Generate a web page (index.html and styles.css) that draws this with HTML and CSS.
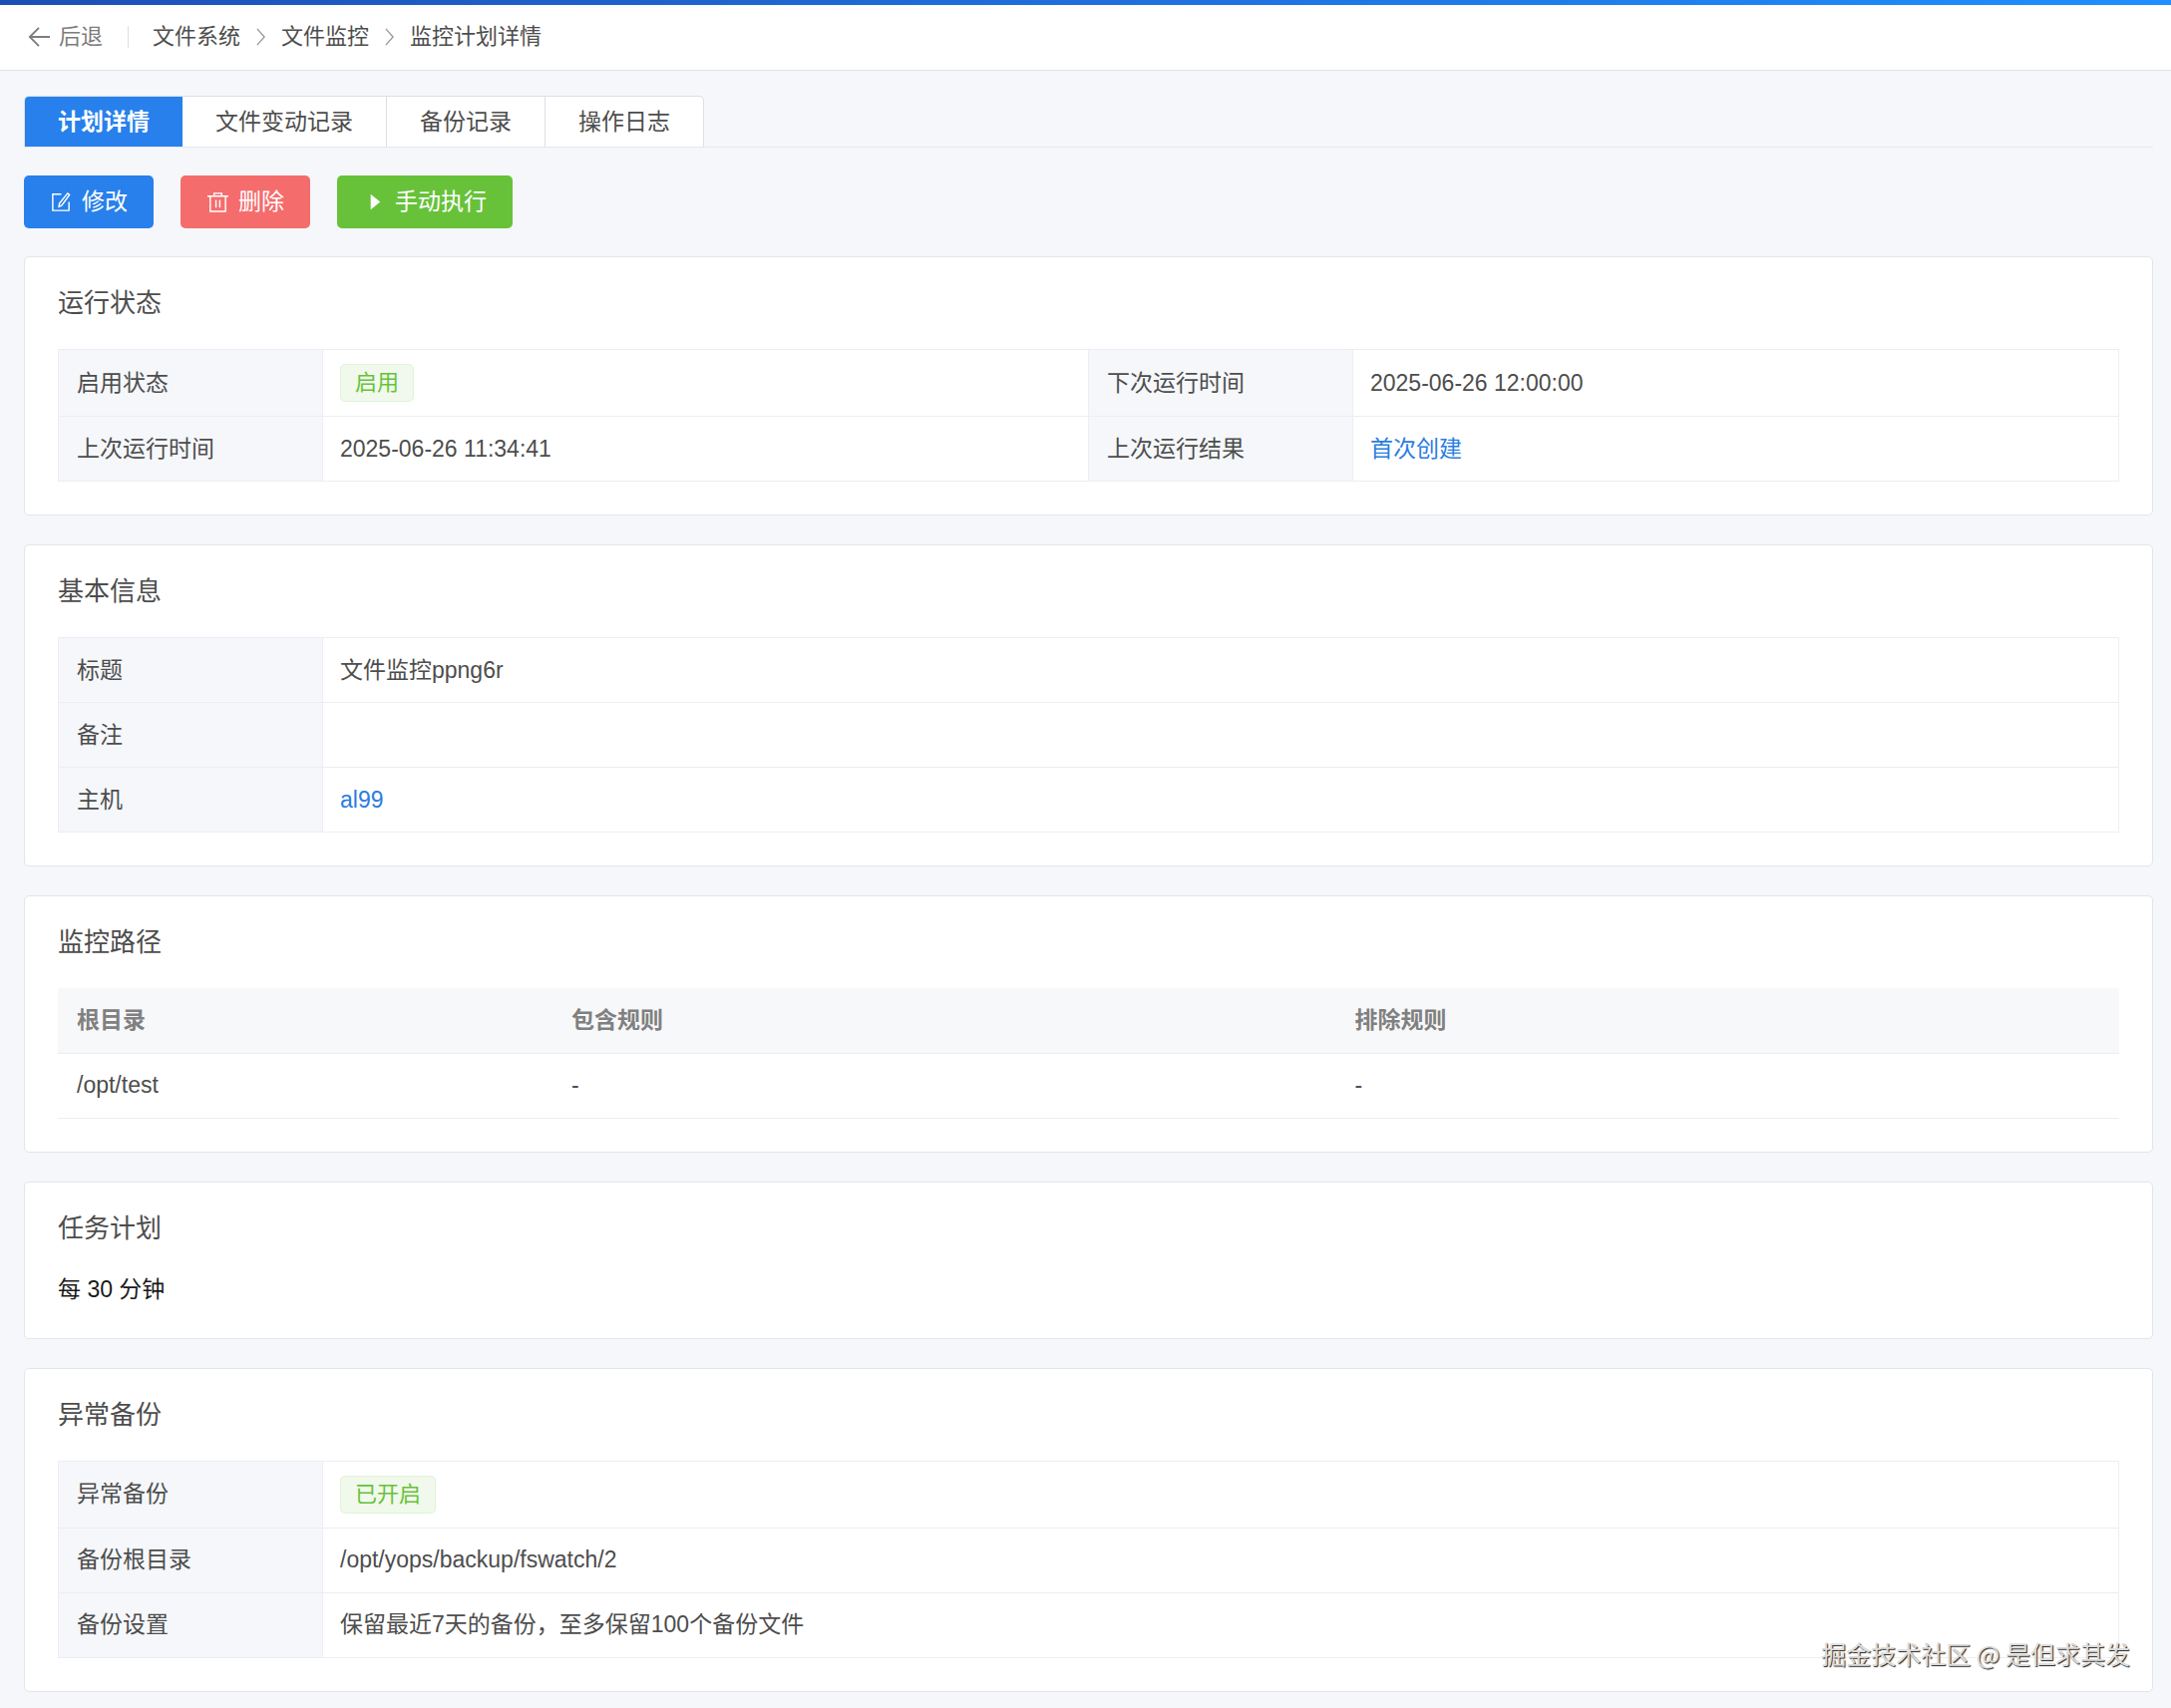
FILE: index.html
```html
<!DOCTYPE html>
<html lang="zh-CN">
<head>
    <meta charset="UTF-8">
    <meta name="viewport" content="width=device-width, initial-scale=1.0">
    <title>监控计划详情</title>
    <link rel="stylesheet" href="styles.css">
</head>
<body>
    <header class="page-header">
        <a class="back" href="#">
            <svg class="back-icon" viewBox="0 0 24 24"><path d="M24 12H2M12 2L2 12l10 10"/></svg>
            后退
        </a>
        <nav class="breadcrumb">
            <a href="#">文件系统</a>
            <svg class="sep" viewBox="0 0 10 20"><path d="M1 1l8 9-8 9"/></svg>
            <a href="#">文件监控</a>
            <svg class="sep" viewBox="0 0 10 20"><path d="M1 1l8 9-8 9"/></svg>
            <span>监控计划详情</span>
        </nav>
    </header>

    <main class="content">
        <nav class="tabs">
            <div class="tabs-nav">
                <a class="tab active" href="#">计划详情</a>
                <a class="tab" href="#">文件变动记录</a>
                <a class="tab" href="#">备份记录</a>
                <a class="tab" href="#">操作日志</a>
            </div>
        </nav>

        <div class="toolbar">
            <button class="btn btn-primary" type="button">
                <svg viewBox="0 0 24 24"><path d="M12 4H3v17h17v-9M18.500 3l2 1.500-8 11-3 1.500.500-3.500z"/></svg>
                修改
            </button>
            <button class="btn btn-danger" type="button">
                <svg viewBox="0 0 24 24"><path d="M1 6h22M8 6V3h8v3M4 6v16h16V6M10 10v8M14 10v8"/></svg>
                删除
            </button>
            <button class="btn btn-success" type="button">
                <svg viewBox="0 0 24 24"><path class="solid" d="M8 4l10 8-10 8z"/></svg>
                手动执行
            </button>
        </div>

        <section class="card">
            <h2>运行状态</h2>
            <table class="desc">
                <tr class="tall">
                    <th>启用状态</th>
                    <td><span class="tag">启用</span></td>
                    <th>下次运行时间</th>
                    <td>2025-06-26 12:00:00</td>
                </tr>
                <tr>
                    <th>上次运行时间</th>
                    <td>2025-06-26 11:34:41</td>
                    <th>上次运行结果</th>
                    <td><a href="#">首次创建</a></td>
                </tr>
            </table>
        </section>

        <section class="card">
            <h2>基本信息</h2>
            <table class="desc">
                <tr>
                    <th>标题</th>
                    <td>文件监控ppng6r</td>
                </tr>
                <tr>
                    <th>备注</th>
                    <td></td>
                </tr>
                <tr>
                    <th>主机</th>
                    <td><a href="#">al99</a></td>
                </tr>
            </table>
        </section>

        <section class="card">
            <h2>监控路径</h2>
            <table class="list">
                <thead>
                    <tr>
                        <th class="col-root">根目录</th>
                        <th>包含规则</th>
                        <th>排除规则</th>
                    </tr>
                </thead>
                <tbody>
                    <tr>
                        <td>/opt/test</td>
                        <td>-</td>
                        <td>-</td>
                    </tr>
                </tbody>
            </table>
        </section>

        <section class="card">
            <h2>任务计划</h2>
            <p class="cron">每 30 分钟</p>
        </section>

        <section class="card">
            <h2>异常备份</h2>
            <table class="desc">
                <tr class="tall">
                    <th>异常备份</th>
                    <td><span class="tag">已开启</span></td>
                </tr>
                <tr>
                    <th>备份根目录</th>
                    <td>/opt/yops/backup/fswatch/2</td>
                </tr>
                <tr>
                    <th>备份设置</th>
                    <td>保留最近7天的备份，至多保留100个备份文件</td>
                </tr>
            </table>
        </section>
    </main>

    <div class="watermark">掘金技术社区 @ 是但求其发</div>
</body>
</html>
```

FILE: styles.css
```css
* {
    margin: 0;
    padding: 0;
    box-sizing: border-box;
}

body {
    position: relative;
    min-height: 100vh;
    background-color: #f5f7fa;
    color: #4d4d4d;
    font-family: "Liberation Sans", "Noto Sans CJK SC", sans-serif;
    font-size: 23px;
    line-height: 31px;
}

a {
    color: #2a7de1;
    text-decoration: none;
}

svg {
    fill: none;
    stroke: currentColor;
    flex: none;
}

/* 顶部导航 */
.page-header {
    display: flex;
    align-items: center;
    height: 71px;
    padding: 0 28px 3px;
    background-color: #fff;
    border-top: 5px solid;
    border-image: linear-gradient(to right, #1c4fb5, #1f6fdc 50%, #1e90ff) 1;
    box-shadow: inset 0 -1px #dfe2e6;
    font-size: 22px;
}

.back {
    display: flex;
    align-items: center;
    gap: 9px;
    padding-right: 25px;
    border-right: 1px solid #dcdfe6;
    line-height: 22px;
    color: #7d7d7d;
}

.back-icon {
    width: 22px;
    height: 22px;
    stroke-width: 2;
}

.breadcrumb {
    display: flex;
    align-items: center;
    gap: 16px;
    padding-left: 24px;
}

.breadcrumb a,
.breadcrumb span {
    color: #4d4d4d;
}

.sep {
    width: 9px;
    height: 18px;
    color: #999;
    stroke-width: 1.5;
}

.content {
    padding: 25px 18px 17px 24px;
}

/* 标签页 */
.tabs {
    display: flex;
    border-bottom: 1px solid #e4e7ed;
}

.tabs-nav {
    display: flex;
    border: 1px solid #dcdfe6;
    border-bottom: none;
    border-radius: 5px 5px 0 0;
    background-color: #fff;
    overflow: hidden;
}

.tab {
    padding: 1px 33px 0;
    line-height: 49px;
    color: #4d4d4d;
}

.tab + .tab {
    border-left: 1px solid #dcdfe6;
}

.tab.active {
    background-color: #2780eb;
    color: #fff;
    font-weight: bold;
}

.tab.active + .tab {
    border-left: none;
}

/* 操作按钮 */
.toolbar {
    display: flex;
    gap: 27px;
    margin: 28px 0;
}

.btn {
    display: flex;
    align-items: center;
    gap: 9px;
    height: 53px;
    padding: 0 26px;
    border: none;
    border-radius: 5px;
    color: #fff;
    font: inherit;
    cursor: pointer;
}

.btn svg {
    width: 23px;
    height: 23px;
    stroke-width: 1.5;
}

.btn .solid {
    fill: currentColor;
    stroke: none;
}

.btn-primary {
    background-color: #2780eb;
}

.btn-danger {
    background-color: #f56c6c;
}

.btn-success {
    background-color: #67c23a;
}

/* 卡片 */
.card {
    padding: 30px 33px 33px;
    border: 1px solid #e2e5ea;
    border-radius: 5px;
    background-color: #fff;
}

.card + .card {
    margin-top: 29px;
}

.card h2 {
    margin-bottom: 30px;
    font-size: 26px;
    font-weight: normal;
    line-height: 32px;
}

table {
    width: 100%;
    border-collapse: collapse;
    table-layout: fixed;
}

th,
td {
    height: 65px;
    padding: 0 18px;
    text-align: left;
}

.desc th,
.desc td {
    border: 1px solid #ebeef2;
}

.desc td {
    padding: 0 17px;
}

.desc th {
    width: 265px;
    background-color: #f5f7fa;
    font-weight: normal;
}

.desc .tall th,
.desc .tall td {
    height: 67px;
}

.list th,
.list td {
    padding: 0 19px;
    border-bottom: 1px solid #ebeef2;
}

.list th {
    background-color: #f7f8fa;
    color: #808080;
}

.list .col-root {
    width: 24%;
}

.tag {
    display: inline-block;
    padding: 0 14px;
    border: 1px solid #e1f3d8;
    border-radius: 5px;
    background-color: #f0f9eb;
    color: #67c23a;
    font-size: 22px;
    line-height: 36px;
    vertical-align: middle;
}

.cron {
    color: #1a1a1a;
}

/* 水印 */
.watermark {
    position: absolute;
    right: 41px;
    bottom: 40px;
    color: #ddd;
    font-family: "Noto Sans CJK SC", sans-serif;
    font-size: 25px;
    text-shadow: 1px 1px 1px #222;
}
```
